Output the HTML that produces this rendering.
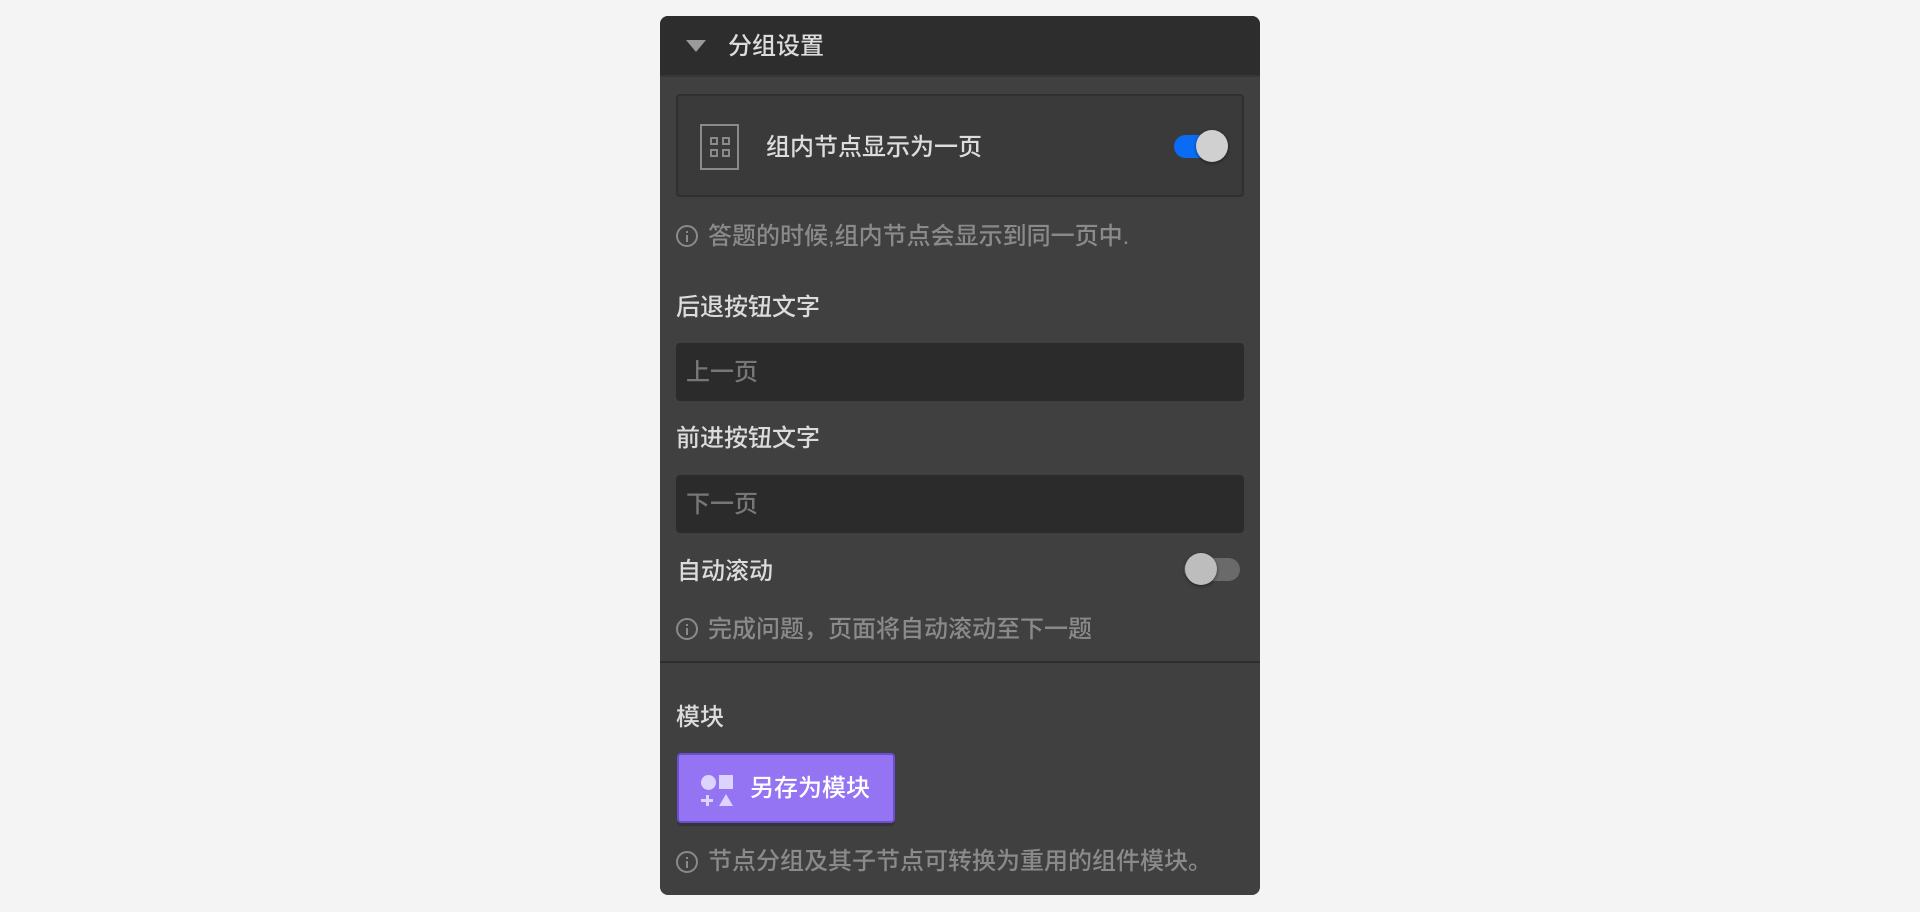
<!DOCTYPE html>
<html><head><meta charset="utf-8"><style>
*{margin:0;padding:0;box-sizing:border-box}
body{width:1920px;height:912px;background:#f4f4f4;font-family:"Liberation Sans","Noto Sans CJK SC",sans-serif;position:relative;overflow:hidden}
.p{position:absolute;left:660px;top:16px;width:600px;height:879px;background:#404040;border-radius:8px;overflow:hidden}
.hd{position:absolute;left:0;top:0;width:600px;height:61px;background:#2d2d2d;border-bottom:2px solid #373737}
.a{position:absolute}
.t{color:#dcdcdc;font-size:24px;line-height:1;font-weight:500}
.g{color:#8a8a8a;font-size:24px;line-height:1;font-weight:500}
.info{position:absolute;width:22px;height:22px;border:2px solid #8a8a8a;border-radius:50%}
.info:before{content:"";position:absolute;left:8px;top:4px;width:2px;height:2px;background:#8a8a8a}
.info:after{content:"";position:absolute;left:8px;top:8px;width:2px;height:7px;background:#8a8a8a}
.inp{position:absolute;left:16px;width:568px;height:58px;background:#2b2b2b;border-radius:4px}
</style></head><body>
<div class="p">
<div class="hd">
<div class="a" style="left:26px;top:24px;width:0;height:0;border-left:10px solid transparent;border-right:10px solid transparent;border-top:12px solid #9a9a9a"></div>
<div class="a t" style="left:68px;top:19px">分组设置</div>
</div>
<div class="a" style="left:16px;top:78px;width:568px;height:103px;background:#3a3a3a;border:2px solid #2f2f2f;border-radius:4px">
<div class="a" style="left:22px;top:28px;width:39px;height:46px;border:2px solid #8a8a8a"></div>
<div class="a" style="left:32px;top:41px;width:8px;height:8px;border:2px solid #8a8a8a"></div>
<div class="a" style="left:44px;top:41px;width:8px;height:8px;border:2px solid #8a8a8a"></div>
<div class="a" style="left:32px;top:53px;width:8px;height:8px;border:2px solid #8a8a8a"></div>
<div class="a" style="left:44px;top:53px;width:8px;height:8px;border:2px solid #8a8a8a"></div>
<div class="a t" style="left:88px;top:40px">组内节点显示为一页</div>
<div class="a" style="left:496px;top:39px;width:46px;height:23px;background:#0a6cf5;border-radius:12px"></div>
<div class="a" style="left:518px;top:34px;width:32px;height:32px;background:#d0d0d0;border-radius:50%;box-shadow:0 1px 3px rgba(0,0,0,.5)"></div>
</div>
<div class="info" style="left:16px;top:209px"></div>
<div class="a g" style="left:48px;top:209px">答题的时候,组内节点会显示到同一页中.</div>
<div class="a t" style="left:16px;top:280px">后退按钮文字</div>
<div class="inp" style="top:327px"><div class="a g" style="left:10px;top:18px;color:#777">上一页</div></div>
<div class="a t" style="left:16px;top:411px">前进按钮文字</div>
<div class="inp" style="top:459px"><div class="a g" style="left:10px;top:18px;color:#777">下一页</div></div>
<div class="a t" style="left:17px;top:544px">自动滚动</div>
<div class="a" style="left:524px;top:542px;width:56px;height:23px;background:#6a6a6a;border-radius:12px"></div>
<div class="a" style="left:525px;top:537px;width:32px;height:32px;background:#bdbdbd;border-radius:50%;box-shadow:0 1px 3px rgba(0,0,0,.5)"></div>
<div class="info" style="left:16px;top:602px"></div>
<div class="a g" style="left:48px;top:602px">完成问题，页面将自动滚动至下一题</div>
<div class="a" style="left:0;top:645px;width:600px;height:2px;background:#2e2e2e"></div>
<div class="a t" style="left:16px;top:690px">模块</div>
<div class="a" style="left:17px;top:737px;width:218px;height:70px;background:#9474f3;border:2px solid #6a4fd0;border-radius:4px;box-shadow:0 3px 0 #353535">
<div class="a" style="left:22px;top:20px;width:15px;height:15px;background:#dcd3ff;border-radius:50%"></div>
<div class="a" style="left:40px;top:20px;width:14px;height:14px;background:#dcd3ff"></div>
<div class="a" style="left:22px;top:44px;width:12px;height:3px;background:#dcd3ff"></div>
<div class="a" style="left:26.5px;top:40px;width:3px;height:11px;background:#dcd3ff"></div>
<div class="a" style="left:40px;top:39px;width:0;height:0;border-left:7px solid transparent;border-right:7px solid transparent;border-bottom:12px solid #dcd3ff"></div>
<div class="a" style="left:71px;top:22px;color:#fff;font-size:24px;line-height:1;font-weight:500">另存为模块</div>
</div>
<div class="info" style="left:16px;top:835px"></div>
<div class="a g" style="left:48px;top:834px">节点分组及其子节点可转换为重用的组件模块。</div>
</div>
</body></html>
